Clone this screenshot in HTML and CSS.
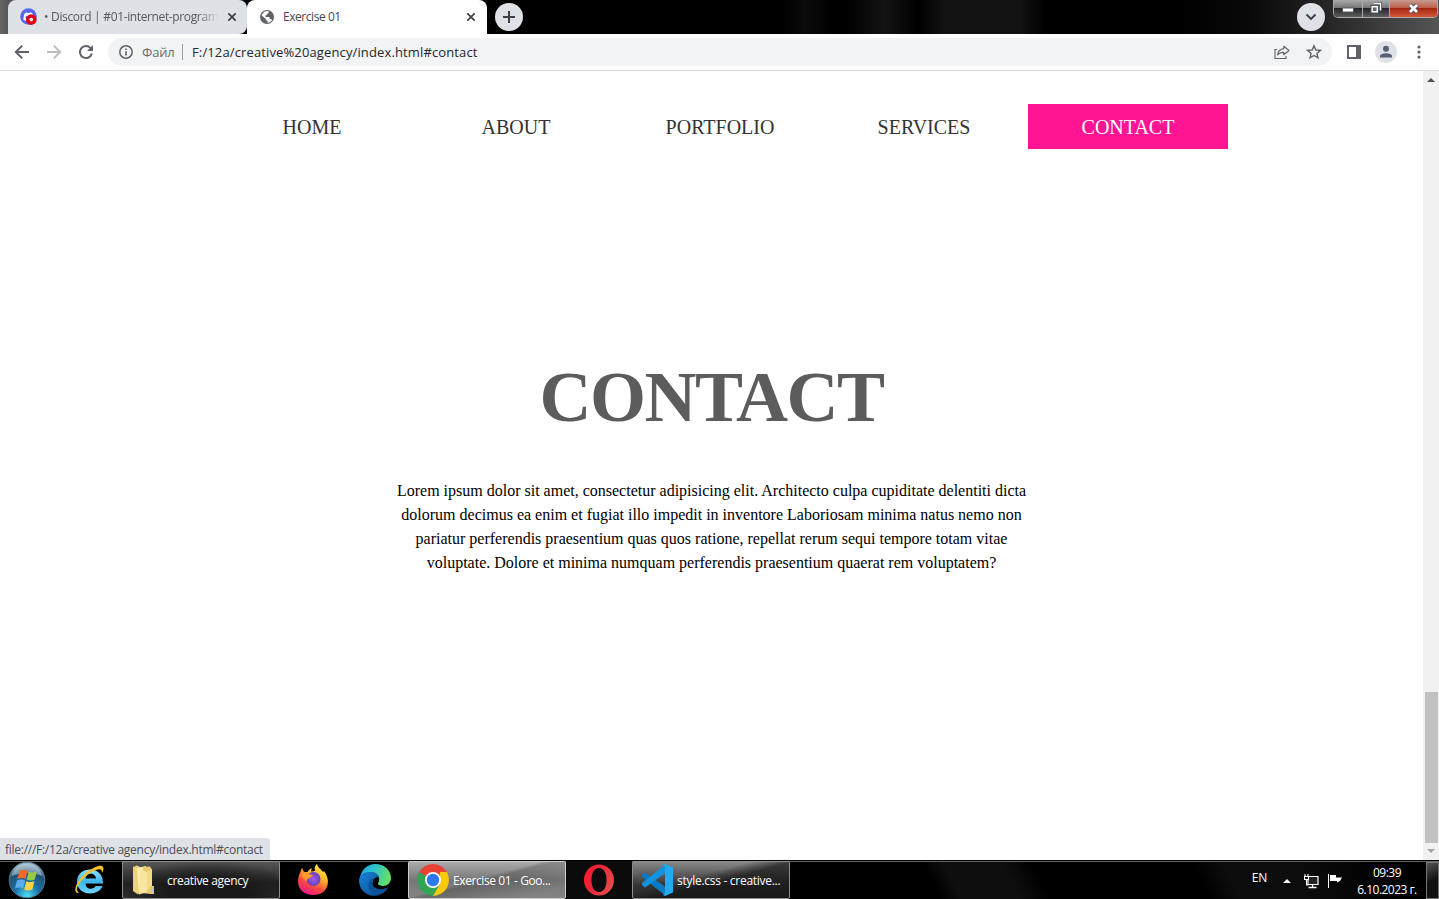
FILE: index.html
```html
<!DOCTYPE html>
<html lang="bg">
<head>
<meta charset="utf-8">
<title>Exercise 01</title>
<link rel="stylesheet" href="styles.css">
</head>
<body>
<div class="desktop">
  <header class="tabstrip">
    <div class="tab tab-idle">
      <svg class="favicon" width="18" height="18" viewBox="0 0 18 18"><circle cx="8.500" cy="8.500" r="8.300" fill="#5865f2"/><path d="M3.500 12c-.2-3 .4-5.500 1.700-7.100L7 4.300l.5.8h2l.5-.8 2 .6c1.300 1.600 1.900 4 1.700 7.100L11.500 13H6z" fill="#fff"/><circle cx="6.600" cy="9.200" r="1.100" fill="#5865f2"/><circle cx="11.300" cy="11.600" r="5.300" fill="#e60012"/><circle cx="11.300" cy="11.600" r="1.800" fill="#fff"/></svg>
      <span class="tab-title title-discord">• Discord | #01-internet-program</span>
      <svg class="tab-close" width="8" height="8" viewBox="0 0 8 8"><path d="M.3.3l7.400 7.400M7.700.3L.3 7.700" stroke="#3c4043" stroke-width="1.700"/></svg>
    </div>
    <div class="tab tab-active">
      <svg class="favicon" width="16" height="16" viewBox="0 0 16 16"><circle cx="7" cy="8" r="7" fill="#5f6368"/><path d="M8.600 2.200c.6 1 0 2-1.200 2.300l-.2 1.300-1.700.6v1.500H9c.9.3.7 1.300.7 2.200h1.500l.9.900c-1 1.700-2.500 2.600-4.600 2.700v-1.900L5.900 11V9.900L1.700 6.600C2.300 4.500 4 2.600 6.400 2.100z" fill="#fff"/></svg>
      <span class="tab-title title-exercise">Exercise 01</span>
      <svg class="tab-close" width="8" height="8" viewBox="0 0 8 8"><path d="M.3.3l7.400 7.400M7.700.3L.3 7.700" stroke="#3c4043" stroke-width="1.700"/></svg>
    </div>
    <div class="round-button new-tab"><svg width="12" height="12" viewBox="0 0 12 12"><path d="M6 0v12M0 6h12" stroke="#3c4043" stroke-width="2"/></svg></div>
    <div class="round-button tab-search"><svg width="12" height="8" viewBox="0 0 12 8"><path d="M1.500 1.500L6 6l4.500-4.500" fill="none" stroke="#3c4043" stroke-width="1.900"/></svg></div>
    <div class="window-buttons">
      <div class="win win-min"><svg width="14" height="6" viewBox="0 0 14 6"><rect x="1.500" y="1" width="11" height="4" rx=".5" fill="#fff" stroke="#555a68"/></svg></div>
      <div class="win win-max"><svg width="12" height="12" viewBox="0 0 12 12"><path d="M4 1.500h6.500v7" fill="none" stroke="#505565" stroke-width="3"/><path d="M4 1.500h6.500v7" fill="none" stroke="#fff" stroke-width="1.300"/><rect x="1" y="3.500" width="7.500" height="7.500" fill="#fff" stroke="#505565"/><rect x="3.500" y="6" width="2.500" height="2.500" fill="#888" stroke="#505565"/></svg></div>
      <div class="win win-close"><svg width="13" height="11" viewBox="0 0 13 11"><path d="M3 2l7 7M10 2L3 9" stroke="#565064" stroke-width="4.600"/><path d="M3 2l7 7M10 2L3 9" stroke="#fff" stroke-width="2.700"/></svg></div>
    </div>
  </header>

  <div class="toolbar">
    <svg class="nav-icon" width="16" height="16" viewBox="0 0 16 16"><path d="M15 8H2M8.200 1.600L1.800 8l6.400 6.400" fill="none" stroke="#5f6368" stroke-width="2"/></svg>
    <svg class="nav-icon" width="16" height="16" viewBox="0 0 16 16"><path d="M1 8h13M7.800 1.600L14.200 8l-6.400 6.400" fill="none" stroke="#bcbec1" stroke-width="2"/></svg>
    <svg class="nav-icon" width="16" height="16" viewBox="0 0 16 16"><path d="M13.800 9.500A6 6 0 1 1 12.500 4.100L14 5.600" fill="none" stroke="#5f6368" stroke-width="2"/><path d="M15 1v6H9z" fill="#5f6368"/></svg>
    <div class="omnibox">
      <svg width="14" height="14" viewBox="0 0 14 14"><circle cx="7" cy="7" r="6.200" fill="none" stroke="#5f6368" stroke-width="1.500"/><path d="M7 6.200v4.300M7 3.500v1.600" stroke="#5f6368" stroke-width="1.600"/></svg>
      <span class="scheme">Файл</span>
      <span class="divider"></span>
      <span class="url">F:/12a/creative%20agency/index.html#contact</span>
      <svg class="share" width="16" height="15" viewBox="0 0 16 15"><path d="M3 4.500H1v9h11v-2.500" fill="none" stroke="#5f6368" stroke-width="1.100"/><path d="M9.800 1.300L15 5.500l-5.200 4.200V7.400C7 7.300 5 8 3.500 10 4 6.700 6 4.100 9.800 3.600z" fill="none" stroke="#5f6368" stroke-width="1.100" stroke-linejoin="round"/></svg>
      <svg class="star" width="16" height="16" viewBox="0 0 16 16"><path d="M8 1.800l1.800 4.200 4.600.4-3.500 3 1.100 4.500L8 11.500l-4 2.400 1.100-4.500-3.500-3L6.200 6z" fill="none" stroke="#5f6368" stroke-width="1.400"/></svg>
    </div>
    <svg class="sidepanel" width="14" height="14" viewBox="0 0 14 14"><path fill-rule="evenodd" d="M0 0h14v14H0zM2 2v10h7V2z" fill="#5f6368"/></svg>
    <div class="avatar"><svg width="14" height="14" viewBox="0 0 14 14"><circle cx="7" cy="3.800" r="3" fill="#566174"/><path d="M1 12.500V11C1 9 5 8.200 7 8.200S13 9 13 11v1.500z" fill="#566174"/></svg></div>
    <svg class="menu" width="4" height="14" viewBox="0 0 4 14"><g fill="#5f6368"><circle cx="2" cy="2" r="1.600"/><circle cx="2" cy="7" r="1.600"/><circle cx="2" cy="12" r="1.600"/></g></svg>
  </div>

  <div class="viewport">
    <main class="page">
      <nav class="site-nav">
        <a>HOME</a><a>ABOUT</a><a>PORTFOLIO</a><a>SERVICES</a><a class="current">CONTACT</a>
      </nav>
      <h1>CONTACT</h1>
      <p class="copy">Lorem ipsum dolor sit amet, consectetur adipisicing elit. Architecto culpa cupiditate delentiti dicta<br>dolorum decimus ea enim et fugiat illo impedit in inventore Laboriosam minima natus nemo non<br>pariatur perferendis praesentium quas quos ratione, repellat rerum sequi tempore totam vitae<br>voluptate. Dolore et minima numquam perferendis praesentium quaerat rem voluptatem?</p>
      <div class="status"><span class="status-text">file:///F:/12a/creative agency/index.html#contact</span></div>
    </main>
    <div class="scrollbar">
      <svg width="8" height="4" viewBox="0 0 8 4"><path d="M0 4l4-4 4 4z" fill="#505050"/></svg>
      <div class="thumb"></div>
      <svg width="8" height="4" viewBox="0 0 8 4"><path d="M0 0l4 4 4-4z" fill="#a3a3a3"/></svg>
    </div>
  </div>

  <footer class="taskbar">
    <div class="launch start">
      <svg width="38" height="38" viewBox="0 0 38 38"><defs><radialGradient id="orb" cx=".5" cy=".95" r=".9"><stop offset="0" stop-color="#4fe0f5"/><stop offset=".4" stop-color="#1871a8"/><stop offset=".75" stop-color="#245275"/><stop offset="1" stop-color="#9bb8c9"/></radialGradient></defs><circle cx="19" cy="19" r="17.800" fill="url(#orb)" stroke="#52798e"/><path d="M4 15C6 5 13 3 19 3s13 3 15 12C25 11 13 11 4 15z" fill="#d5e4eb" opacity=".42"/><path d="M11.500 10c3-2 5.500-1.500 8-.2L17.500 18c-2.500-1.300-5.200-1.400-8.200 0z" fill="#f06a28"/><path d="M20.800 10.500c2.700 1.200 5.300 1.200 8.200-.2l-2.200 8.200c-2.700 1.300-5.500 1.300-8.200 0z" fill="#98c94a"/><path d="M9 19.500c2.800-1.400 5.500-1.300 8.200 0l-2.100 8c-2.700-1.300-5.400-1.300-8.200.1z" fill="#5cacea"/><path d="M18.300 20.200c2.700 1.200 5.400 1.200 8.200-.1l-2.200 8.300c-2.700 1.400-5.400 1.300-8.100 0z" fill="#fcd344"/></svg>
    </div>
    <div class="launch ie">
      <svg width="32" height="32" viewBox="0 0 32 32"><defs><linearGradient id="ieg" x2="0" y2="1"><stop stop-color="#8de3ff"/><stop offset=".5" stop-color="#3db5ef"/><stop offset="1" stop-color="#6fd4fb"/></linearGradient></defs><path fill-rule="evenodd" d="M30 19.500H12.500c0 6 8 7 10 2.500H29.500C26 32.500 4 32.500 4 17.500 4 1.500 31 1 30 19.500zM12.500 14.500H23C22.500 8 13 8 12.500 14.500z" fill="url(#ieg)"/><path d="M6 29C-2 30 4 15 14 8 21 3 28 0 30 3c1 1.500.2 4-1 6 0-3-1-5-6-3C12 10 3 22 4 26c.2 1 1 2 2 3z" fill="#f4c22d"/></svg>
    </div>
    <div class="task task-folder">
      <svg width="24" height="30" viewBox="0 0 24 30"><path d="M1 2l4-1.500L8 2v25L6 29.500 1 26z" fill="#eed27b"/><path d="M5 3l9-2v22l-7 4z" fill="#fff1ae"/><path d="M11 2l7-.5 2 3V21l2 1v7h-3l-10-1z" fill="#e8cb70"/><path d="M8 4l7 3v20l-8 2.500z" fill="#f9e59d"/><path d="M15 7l5-2.500V21l-5 5z" fill="#f3da86"/><path d="M18 21h4v7h-3z" fill="#d4c578"/><path d="M19.500 23.500h1.500v3.500h-1.500z" fill="#a7cddd"/></svg>
      <span class="task-label label-folder">creative agency</span>
    </div>
    <div class="launch firefox">
      <svg width="32" height="32" viewBox="0 0 32 32"><defs><linearGradient id="ffg" x1=".8" y1="0" x2=".3" y2="1"><stop stop-color="#fff44f"/><stop offset=".4" stop-color="#ffb02a"/><stop offset=".68" stop-color="#ff4b3c"/><stop offset="1" stop-color="#e3158c"/></linearGradient><radialGradient id="ffp"><stop stop-color="#a65bea"/><stop offset="1" stop-color="#6542ba"/></radialGradient></defs><path d="M3.500 8C4 5.500 4.500 4.500 5.500 4c0 2 .6 3 2 4l3-.1C12 5 14 4.500 15 4.500c-.5 1-1 2-.8 3L18 7C17 4 18 1.500 20 0c1 4 4 5 6 8l1-1c3 4 4.500 8 3.700 13C29.500 28 23 31 16 31 7 31 1 25.500 1 17.500 1 14 1.800 11 3.500 8z" fill="url(#ffg)"/><circle cx="16.500" cy="15" r="7" fill="url(#ffp)"/><path d="M4.500 11.500l6-3c1.500 1.500 3 2.200 5.500 2.500-.5 2-3 2-4 3.500-1.500 0-2.500 1-2.700 3z" fill="#ff9a29"/></svg>
    </div>
    <div class="launch edge">
      <svg width="32" height="32" viewBox="0 0 32 32"><defs><linearGradient id="ed1" x2="1" y2=".3"><stop stop-color="#229de2"/><stop offset=".5" stop-color="#2ec4cd"/><stop offset="1" stop-color="#62df68"/></linearGradient><linearGradient id="ed2" x2="1" y2="1"><stop stop-color="#1784d8"/><stop offset="1" stop-color="#0e4c91"/></linearGradient></defs><path d="M1 13C3 5 9 0 16 0c9 0 16 6 16 14 0 5-4 8-8 8-3 0-6-1-5-3 4-6-3-13-11-10-3 1-5 2-7 4z" fill="url(#ed1)"/><path d="M0 16C1 9 7 7.500 12 8c6 0 9 4 8 8-8-2-12 12 1 14.500C10 35 0 27 0 16z" fill="url(#ed2)"/><path d="M15 14c-5 6 1 15 14 9.500C24 33 12 34 9.500 23 8.500 19 11 15 15 14z" fill="#0c5299"/><path d="M19.500 13c1 2 .7 4-.3 5.500-1.300 1.800 1 3.500 4.800 3.500-5 2-10-1-10-4.500 0-2.500 2.500-4.500 5.500-4.500z" fill="#050505"/></svg>
    </div>
    <div class="task task-chrome">
      <svg width="32" height="32" viewBox="0 0 32 32"><path d="M16 16L2.200 8A16 16 0 0 1 29.800 8z" fill="#e94235"/><path d="M2.200 8A16 16 0 0 0 16 32l7-12-7-4z" fill="#34a353"/><path d="M29.800 8A16 16 0 0 1 16 32l7-12V8z" fill="#fdc90f"/><circle cx="16" cy="16" r="8" fill="#fff"/><circle cx="16" cy="16" r="6.200" fill="#2b79ed"/></svg>
      <span class="task-label label-chrome">Exercise 01 - Goo...</span>
    </div>
    <div class="launch opera">
      <svg width="32" height="32" viewBox="0 0 32 32"><defs><linearGradient id="opg" x2="1" y2=".5"><stop stop-color="#ff1b2d"/><stop offset=".4" stop-color="#ee2035"/><stop offset="1" stop-color="#e64849"/></linearGradient></defs><path fill-rule="evenodd" d="M16 .5a15 15.500 0 1 0 0 31 15 15.500 0 1 0 0-31zM16 4c5 0 7.500 5 7.500 12S21 28 16 28 8.500 23 8.500 16 11 4 16 4z" fill="url(#opg)"/></svg>
    </div>
    <div class="task task-code">
      <svg width="32" height="32" viewBox="0 0 32 32"><path d="M1 11l3-2.500L26 24l-2 7.500L1 13z" fill="#0879c3"/><path d="M1 21l3 2.500L26 8 24 .5 1 19z" fill="#1592dc"/><path d="M24 0l8 3.500v25L24 32l-2-1 2-2V3l-2-2z" fill="#25a9ef"/></svg>
      <span class="task-label label-code">style.css - creative...</span>
    </div>
    <div class="tray">
      <span class="lang">EN</span>
      <svg class="tray-up" width="8" height="4" viewBox="0 0 8 4"><path d="M0 4l4-4 4 4z" fill="#eef3f6"/></svg>
      <svg class="network" width="15" height="15" viewBox="0 0 15 15"><path d="M5 2.500h9v8H4V6" fill="#222" stroke="#fff" stroke-width="1.200"/><path d="M4.500 13.500h8M8.500 11v2.500" stroke="#fff" stroke-width="1.300"/><path d="M1 0v2M4 0v2M.5 2.500h4v3h-4zM2.500 6v5h2" fill="none" stroke="#fff" stroke-width="1.100"/></svg>
      <svg class="flag" width="14" height="14" viewBox="0 0 14 14"><path d="M.5 0v14" stroke="#fff"/><path d="M2 1h6v2.500h6L12 7l-3 1.500V7H2z" fill="#fff"/></svg>
      <div class="clock"><span class="time">09:39</span><span class="date">6.10.2023 г.</span></div>
      <div class="show-desktop"></div>
    </div>
  </footer>
</div>
</body>
</html>
```
FILE: styles.css
```css
* { box-sizing: border-box; }
body { margin: 0; overflow: hidden; background: #fff; font-family: "Open Sans", "Noto Sans", sans-serif; }
svg { display: block; flex: none; }
span { white-space: nowrap; }
.desktop { width: 1439px; height: 899px; display: flex; flex-direction: column; }

.tabstrip { height: 34px; flex: none; display: flex; padding-left: 8px; background: linear-gradient(90deg, #656565 0, #555 8px, #000 250px, #000 780px, #0a0a0a 805px, #000 835px, #000 845px, #131313 885px, #000 918px, #131313 945px, #131313 1020px, #000 1045px, #000 1180px, #090909 1250px, #222 1320px, #555 1439px); }
.tab { height: 34px; display: flex; align-items: center; flex: none; }
.tab-idle { width: 239px; padding-left: 12px; background: #dee1e6; border-radius: 8px 8px 8px 0; }
.tab-active { width: 240px; padding-left: 13px; background: #fff; border-radius: 8px 8px 0 0; }
.tab-title { font-size: 12px; line-height: 18px; color: #45494d; }
.tab-idle .tab-title { width: 175px; margin-left: 6px; overflow: hidden; color: #55595d; mask-image: linear-gradient(90deg, #000 88%, transparent); }
.tab-active .tab-title { width: 174px; margin-left: 7px; }
.title-discord { letter-spacing: -.37px; word-spacing: .2px; }
.title-exercise { letter-spacing: -.45px; }
.tab-idle .tab-close { margin-left: 9px; }
.tab-active .tab-close { margin-left: 10px; }
.round-button { width: 28px; height: 28px; border-radius: 50%; background: #dee1e6; display: flex; align-items: center; justify-content: center; margin-top: 3px; flex: none; }
.new-tab { margin-left: 8px; }
.tab-search { margin-left: auto; }
.window-buttons { width: 105px; height: 18px; margin-left: 8px; margin-right: 1px; border: 1px solid #aaa; border-top: 0; border-radius: 0 0 5px 5px; display: flex; overflow: hidden; flex: none; }
.win { display: flex; align-items: center; justify-content: center; border-right: 1px solid #aaa; background: linear-gradient(#aaa 0, #777 45%, #252629 50%, #606060 100%); }
.win-min { width: 29px; padding-top: 3px; }
.win-max { width: 27px; padding-bottom: 1px; }
.win-close { flex: 1; padding-bottom: 1px; border: 0; background: linear-gradient(#c59c91 0, #bd604a 45%, #a32710 50%, #d45a39 100%); }

.toolbar { height: 37px; flex: none; display: flex; align-items: center; padding-left: 14px; border-bottom: 1px solid #dadce0; background: #fff; }
.nav-icon { margin-right: 16px; }
.omnibox { width: 1224px; height: 28px; margin-left: -2px; padding-left: 11px; border-radius: 14px; background: #f1f3f4; display: flex; align-items: center; flex: none; }
.scheme { width: 33px; margin-left: 9px; font-size: 13px; letter-spacing: -.2px; color: #6b6f73; }
.divider { width: 1px; height: 16px; margin-left: 7px; background: #9aa0a6; }
.url { margin-left: 9px; font-size: 13px; letter-spacing: .13px; color: #26282b; }
.share { margin-left: auto; }
.star { margin: 0 10px 0 16px; }
.sidepanel { margin-left: 15px; }
.avatar { width: 22px; height: 22px; border-radius: 50%; margin-left: 14px; background: #dee1e6; display: flex; align-items: center; justify-content: center; }
.menu { margin-left: 20px; }

.viewport { height: 789px; flex: none; display: flex; }
.page { width: 1423px; position: relative; font-family: "Liberation Serif", "Times New Roman", serif; }
.site-nav { display: flex; gap: 4px; padding: 33px 0 0 212px; }
.site-nav a { width: 200px; height: 45px; line-height: 47px; text-align: center; font-size: 20px; color: #333; }
.site-nav .current { color: #fff; background: #ff1493; }
h1 { margin: 207px 0 0; font-size: 72px; line-height: 82px; font-weight: 700; letter-spacing: -1.5px; text-align: center; color: #5c5c5c; }
.copy { margin: 41px 0 0; font-size: 16px; line-height: 24px; text-align: center; color: #000; white-space: nowrap; }
.status { position: absolute; left: 0; bottom: 0; width: 270px; height: 22px; padding-left: 5px; background: #dee1e6; border-top-right-radius: 4px; font: 12px/24px "Open Sans", sans-serif; letter-spacing: -.27px; color: #4a4e52; }
.scrollbar { width: 16px; background: #f1f1f1; display: flex; flex-direction: column; align-items: center; padding: 7px 0; }
.thumb { width: 13px; height: 151px; margin: auto 0 6px; background: #c1c1c1; }

.taskbar { height: 39px; flex: none; display: flex; border-top: 1px solid #000; box-shadow: inset 0 1px #666; background: linear-gradient(63deg, transparent 64.500%, #0e0e0e 66% 70%, transparent 72%, transparent 83%, #0c0c0c 85% 90%, transparent 96%), #000; }
.launch { display: flex; align-items: center; flex: none; }
.start { width: 73px; padding-left: 8px; }
.ie { width: 49px; }
.task { width: 158px; height: 38px; display: flex; align-items: center; flex: none; border: 1px solid #8d8d8d; border-radius: 2px; background: radial-gradient(ellipse at 55% 100%, #191919 0 35%, transparent 75%), linear-gradient(#565656, #222 60%, #303030); }
.task-folder { padding-left: 9px; }
.firefox { width: 62px; padding-left: 17px; }
.edge { width: 66px; padding-left: 17px; }
.task-chrome { border-color: #ccc; padding-left: 8px; background: linear-gradient(165deg, transparent 45%, #0003 50%, transparent 85%), linear-gradient(#aaa, #777 50%, #858585); }
.opera { width: 66px; padding-left: 17px; background: #0b0b0b; }
.task-code { padding-left: 8px; background: linear-gradient(165deg, transparent 40%, #111a 55%), linear-gradient(#888, #343434 65%, #2a2a2a); }
.task-label { font-size: 12px; color: #fff; margin-left: 4px; }
.label-folder { margin-left: 11px; letter-spacing: -.33px; }
.label-chrome { letter-spacing: -.4px; }
.label-code { letter-spacing: -.28px; }
.tray { margin-left: auto; display: flex; color: #fff; font-size: 12px; flex: none; }
.lang { margin: 8px 16px 0 0; line-height: 18px; letter-spacing: -.2px; }
.tray-up { margin-top: 18px; margin-right: 13px; }
.network { margin-top: 13px; margin-right: 9px; }
.flag { margin-top: 13px; margin-right: 14px; }
.clock { width: 62px; display: flex; flex-direction: column; align-items: center; padding-top: 3px; line-height: 17px; letter-spacing: -.52px; margin-right: 8px; }
.show-desktop { width: 13px; height: 37px; margin-top: 1px; border: 1px solid #777; background: linear-gradient(150deg, #555, #111 50%); }
```
